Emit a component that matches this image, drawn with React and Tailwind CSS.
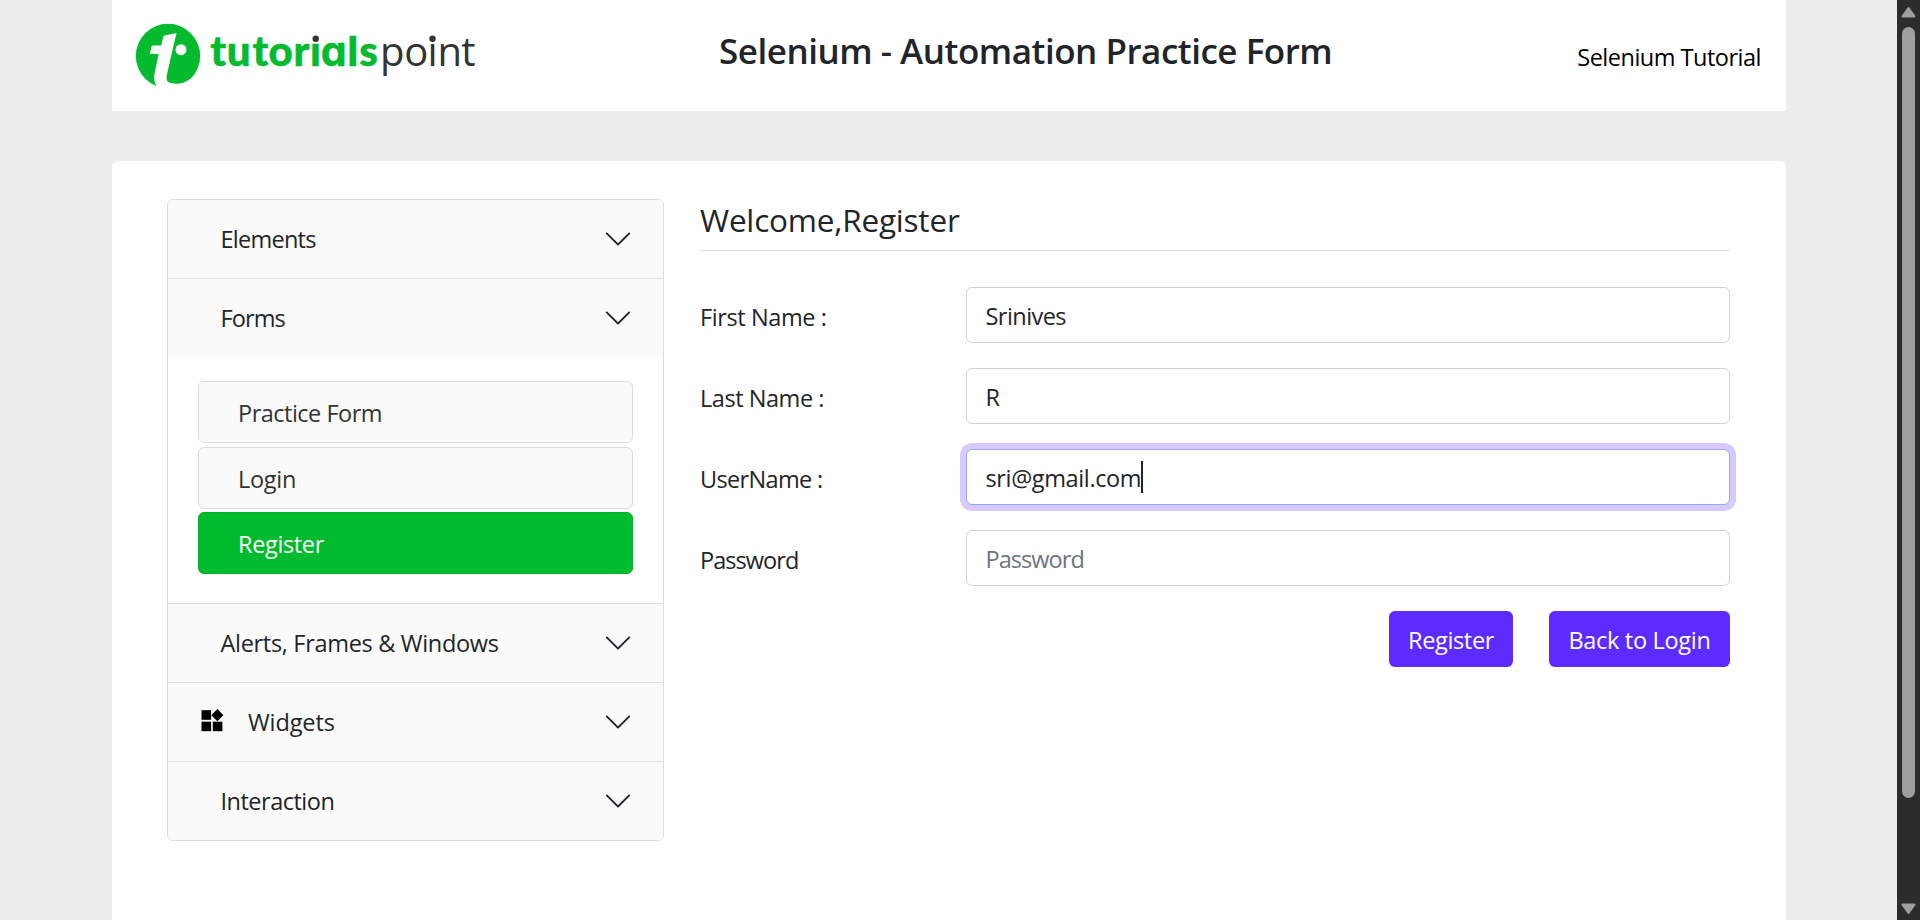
import React from "react";

function Logo() {
  return (
    <svg width="344" height="70" viewBox="134 22 344 70" className="block">
      <circle cx="168" cy="56" r="32.2" fill="#04ba2f" />
      <path
        d="M163.5 35.7 L176.5 33 L167.3 72.7 Q165 81 169 82.6 Q176 84.8 184 82.4 Q189 80.6 193.4 76.6 L194 92 L160 92 L156.6 86.4 Q152.6 80 155 71 L158.7 54 L149.8 54 L151.8 45.5 L161.2 45.5 Z"
        fill="#fff"
      />
      <circle cx="181" cy="49.7" r="5.5" fill="#fff" />
      <text
        x="210.3 226.7 252.5 268.6 293.6 310 320.8 347.3 359.3"
        y="66"
        className="fill-[#04ba2f] stroke-[#04ba2f] stroke-[0.5px] font-['Lato',sans-serif] text-[42px] font-black"
      >
        tutori
        <tspan className="font-['Inter',sans-serif] text-[41px] font-bold [font-feature-settings:'cv11']">al</tspan>
        s
      </text>
      <text
        x="380 404.2 427.6 437.5 461.2"
        y="66"
        className="fill-[#333] font-['Open_Sans',sans-serif] text-[40px] font-normal"
      >
        point
      </text>
      <rect x="310.5" y="32" width="10.5" height="11" fill="#fff" />
      <circle cx="315.7" cy="38.7" r="3.2" fill="#333" />
      <circle cx="432.5" cy="38.7" r="3.2" fill="#333" />
    </svg>
  );
}

function Chevron() {
  return (
    <svg width="30" height="30" viewBox="0 0 16 16" fill="#212529">
      <path
        fillRule="evenodd"
        d="M1.646 4.646a.5.5 0 0 1 .708 0L8 10.293l5.646-5.647a.5.5 0 0 1 .708.708l-6 6a.5.5 0 0 1-.708 0l-6-6a.5.5 0 0 1 0-.708z"
      />
    </svg>
  );
}

function WidgetsIcon() {
  return (
    <svg width="23" height="23" viewBox="0 0 23 23" fill="#000">
      <rect x="0.5" y="1.2" width="9.6" height="9.6" />
      <rect x="0.5" y="12.7" width="9.6" height="9.5" />
      <rect x="11.8" y="12.7" width="9.6" height="9.5" />
      <path d="M16.4 0.1 22.4 6.2 16.4 12.3 10.3 6.2z" />
    </svg>
  );
}

function Section({ title, icon, spacing, children, last }) {
  return (
    <section className={last ? "" : "border-b border-[#dedede]"}>
      <button className="flex h-[78px] w-full items-center bg-[#fafafa] pr-[30px] text-left">
        {icon ? (
          <span className="flex w-20 shrink-0 pb-[3px] pl-[33px]">{icon}</span>
        ) : (
          <span className="w-[52.5px] shrink-0" />
        )}
        <span className={"grow whitespace-nowrap " + spacing}>{title}</span>
        <Chevron />
      </button>
      {children}
    </section>
  );
}

function SubItem({ label, active, spacing }) {
  return (
    <li
      className={
        "flex h-[62px] items-center rounded-md border pl-[39px] pt-0.5 " +
        spacing +
        (active
          ? " border-[#04b128] bg-[#00bb2d] text-white"
          : " border-[#dcdcdc] bg-[#fafafa] text-[#333]")
      }
    >
      {label}
    </li>
  );
}

function Row({ label, spacing, children }) {
  return (
    <div className="flex h-14 items-center">
      <label className={"w-[266px] shrink-0 whitespace-nowrap pt-[3px] " + spacing}>{label}</label>
      {children}
    </div>
  );
}

const FIELD =
  "flex h-14 w-[764px] items-center rounded-md border bg-white pl-[18.5px] pt-px outline-none placeholder:text-[#6c757d]";

export default function App() {
  return (
    <div className="flex h-[920px] w-[1920px] overflow-hidden bg-[#ededed] font-['Open_Sans',sans-serif] text-[23.5px] leading-9 text-[#212529]">
      <div className="w-[1897px] pl-[112px]">
        <header className="flex h-[111px] w-[1674px] bg-white pl-[22px] pr-[25px]">
          <div className="w-[585px] pt-[22px]">
            <Logo />
          </div>
          <h1 className="grow whitespace-nowrap pt-[29px] text-[35px] font-semibold leading-[44px] tracking-[-0.48px]">
            Selenium - Automation Practice Form
          </h1>
          <a className="whitespace-nowrap pt-[39px] text-black tracking-[-0.5px]">Selenium Tutorial</a>
        </header>

        <main className="mt-[50px] flex h-[780px] w-[1674px] rounded-t-md bg-white pl-[55px] pt-[38px]">
          <nav className="h-[642px] w-[497px] overflow-hidden rounded-md border border-[#dedede]">
            <Section title="Elements" spacing="tracking-[-0.75px]" />
            <Section title="Forms" spacing="tracking-[-0.9px]">
              <ul className="flex h-[246px] flex-col gap-[3.5px] px-[30px] pt-6">
                <SubItem label="Practice Form" spacing="tracking-[-0.5px]" />
                <SubItem label="Login" spacing="tracking-[-0.3px]" />
                <SubItem label="Register" active spacing="tracking-[-0.35px]" />
              </ul>
            </Section>
            <Section title="Alerts, Frames &amp; Windows" spacing="tracking-[-0.31px]" />
            <Section title="Widgets" icon={<WidgetsIcon />} spacing="tracking-[-0.1px]" />
            <Section title="Interaction" spacing="tracking-[-0.5px]" last />
          </nav>

          <form className="ml-9 flex w-[1030px] flex-col gap-[25px]">
            <h2 className="mb-[11px] h-[52px] border-b border-[#dee2e6] text-[31.5px] leading-[42px] tracking-[-0.2px]">
              Welcome,Register
            </h2>
            <Row label="First Name :" spacing="tracking-[-0.4px]">
              <input className={FIELD + " border-[#ced4da] tracking-[-0.55px]"} defaultValue="Srinives" />
            </Row>
            <Row label="Last Name :" spacing="tracking-[-0.45px]">
              <input className={FIELD + " border-[#ced4da] tracking-[-0.3px]"} defaultValue="R" />
            </Row>
            <Row label="UserName :" spacing="tracking-[-0.65px]">
              <div className={FIELD + " border-[#97a9ff] shadow-[0_0_0_6px_#d7caff]"}>
                <span className="tracking-[-0.37px]">sri@gmail.com</span>
                <span className="mb-0.5 h-8 w-0.5 bg-[#212529]" />
              </div>
            </Row>
            <Row label="Password" spacing="tracking-[-0.95px]">
              <input className={FIELD + " border-[#ced4da] tracking-[-0.95px]"} placeholder="Password" />
            </Row>
            <div className="flex justify-end gap-9 text-white">
              <button type="button" className="h-14 w-[124px] rounded-md bg-[#5c2bff] pt-0.5 tracking-[-0.35px]">
                Register
              </button>
              <button type="button" className="h-14 w-[181px] rounded-md bg-[#5c2bff] pt-0.5 tracking-[-0.3px]">
                Back to Login
              </button>
            </div>
          </form>
        </main>
      </div>

      <aside className="flex w-[23px] flex-col items-center bg-[#2c2c2c] pt-1.5">
        <svg width="15" height="12" viewBox="0 0 15 12" fill="#9f9f9f" stroke="#9f9f9f" strokeWidth="2" strokeLinejoin="round">
          <path d="M7.5 2 13.5 10.4 1.5 10.4z" />
        </svg>
        <div className="mt-[9px] h-[771px] w-[13px] rounded-full bg-[#9f9f9f]" />
        <svg className="mt-[105px]" width="15" height="12" viewBox="0 0 15 12" fill="#9f9f9f" stroke="#9f9f9f" strokeWidth="2" strokeLinejoin="round">
          <path d="M7.5 10 13.5 1.6 1.5 1.6z" />
        </svg>
      </aside>
    </div>
  );
}
